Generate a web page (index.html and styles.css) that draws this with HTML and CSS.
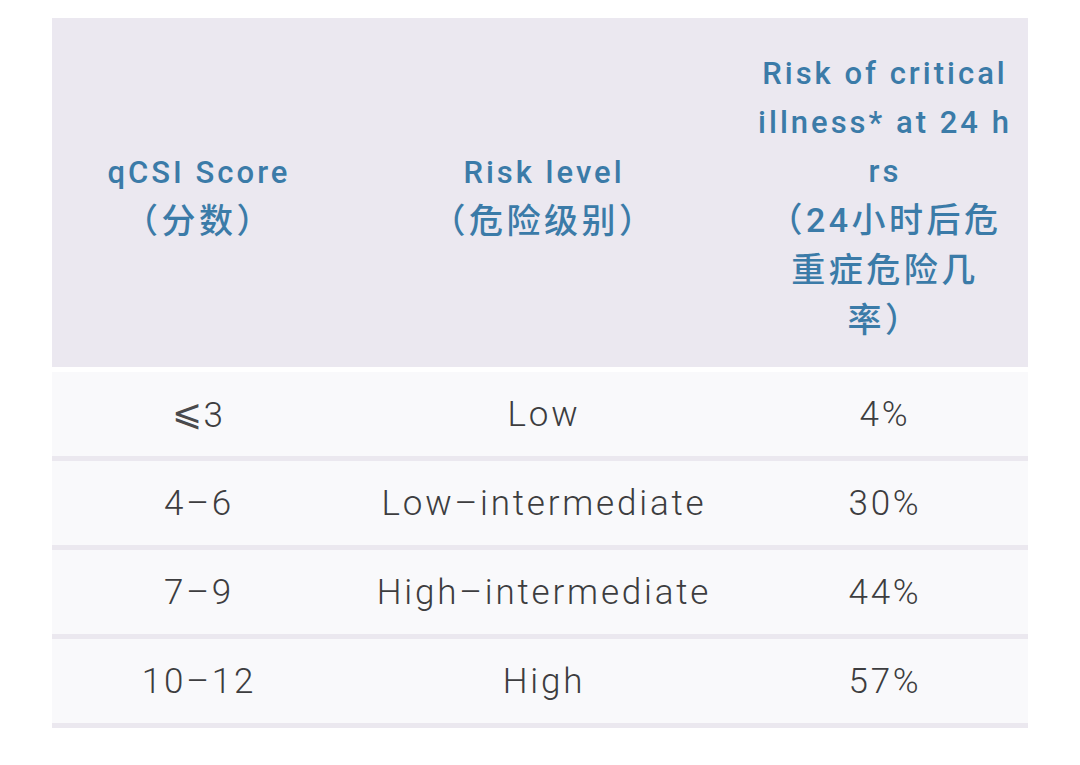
FILE: index.html
```html
<!DOCTYPE html>
<html lang="zh-CN">
<head>
<meta charset="utf-8">
<title>qCSI</title>
<link rel="stylesheet" href="styles.css">
</head>
<body>
<div class="table">
  <div class="head">
    <div class="hcell">qCSI Score<br><span class="zh">（分数）</span></div>
    <div class="hcell">Risk level<br><span class="zh">（危险级别）</span></div>
    <div class="hcell">Risk of critical<br>illness* at 24 h<br>rs<br><span class="zh">（24小时后危<br>重症危险几<br>率）</span></div>
  </div>
  <div class="row">
    <div class="cell"><span class="sym">⩽</span>3</div>
    <div class="cell">Low</div>
    <div class="cell">4%</div>
  </div>
  <div class="row">
    <div class="cell">4–6</div>
    <div class="cell">Low–intermediate</div>
    <div class="cell">30%</div>
  </div>
  <div class="row">
    <div class="cell">7–9</div>
    <div class="cell">High–intermediate</div>
    <div class="cell">44%</div>
  </div>
  <div class="row">
    <div class="cell">10–12</div>
    <div class="cell">High</div>
    <div class="cell">57%</div>
  </div>
</div>
</body>
</html>
```
FILE: styles.css
```css
html, body {
  margin: 0;
  padding: 0;
  background: #ffffff;
}

.table {
  width: 976px;
  margin: 18px 0 0 52px;
}

.head {
  display: grid;
  grid-template-columns: 294px 396px 286px;
  align-items: center;
  box-sizing: border-box;
  height: 349px;
  padding-top: 10px;
  background: #ebe8f0;
  margin-bottom: 5px;
}

.hcell {
  text-align: center;
  font-family: Roboto, "Noto Sans CJK SC", sans-serif;
  font-weight: 500;
  font-size: 31px;
  line-height: 49px;
  letter-spacing: 3px;
  color: #3b7ba8;
}

.zh {
  font-family: Roboto, "Noto Sans CJK SC", sans-serif;
  font-size: 34px;
  letter-spacing: 3.5px;
}

.row {
  display: grid;
  grid-template-columns: 294px 396px 286px;
  align-items: center;
  height: 84px;
  background: #f9f9fb;
  border-bottom: 5px solid #ebe8ef;
}

.cell {
  text-align: center;
  font-family: Roboto, "Noto Sans CJK SC", sans-serif;
  font-weight: 300;
  font-size: 35px;
  letter-spacing: 2.8px;
  color: #3d3d3f;
}

.sym {
  font-family: "DejaVu Sans", sans-serif;
  font-weight: 200;
  font-size: 36px;
  letter-spacing: 1px;
  vertical-align: 2px;
  color: #4a4a4c;
}
```
